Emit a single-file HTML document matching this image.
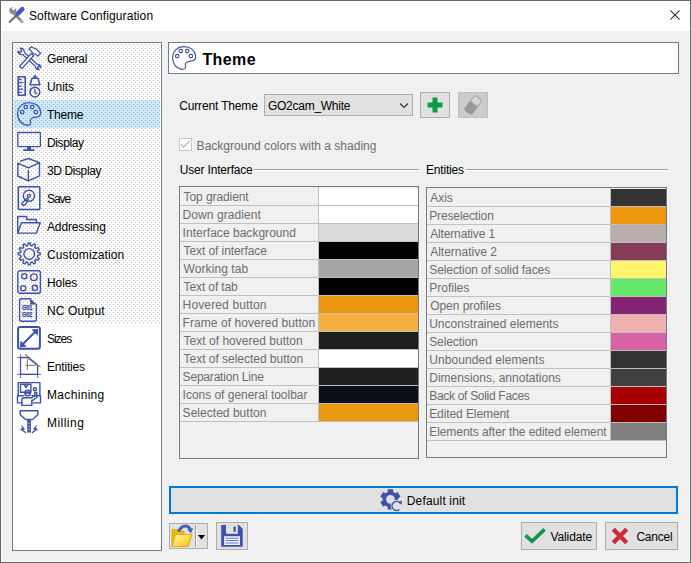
<!DOCTYPE html>
<html><head><meta charset="utf-8"><style>
*{margin:0;padding:0;box-sizing:border-box}
html,body{width:691px;height:563px;overflow:hidden;background:#f0f0f0;font-family:"Liberation Sans",sans-serif;font-size:12px;color:#000}
.a{position:absolute}
svg{position:absolute;overflow:visible}
#win{position:absolute;left:0;top:0;width:691px;height:563px;border:1px solid #676767;background:#f0f0f0}
#title{position:absolute;left:1px;top:1px;width:689px;height:30px;background:#fff}
.tbl{position:absolute;border:1px solid #747b86;background:#f0f0f0;box-sizing:content-box;overflow:hidden}
.tbl .lab{position:absolute;left:0;padding-left:3px;padding-top:1px;color:#6d6d6d;white-space:nowrap}
.tbl .col{position:absolute}
.tbl .sep{position:absolute;left:0;right:0;height:1px;background:#c0c0c0}
.tbl .vsep{position:absolute;width:1px;background:#c0c0c0}
.item{position:absolute;left:47px;height:28px;line-height:28px;padding-top:1px;white-space:nowrap}
.btn{position:absolute;background:#e1e1e1;border:1px solid #adadad}
</style></head><body>
<div id="win"></div>
<div id="title"></div>
<svg style="left:8.3px;top:7px" width="16" height="16" viewBox="0 0 16 16">
<path d="M5 5.5L14 14.5" stroke="#8a8a8a" stroke-width="2.6" stroke-linecap="round"/>
<path d="M1.2 3.5A3.6 3.6 0 1 0 7.5 1.2L5.5 3.6L3.5 1.8L5 0.2A3.6 3.6 0 0 0 1.2 3.5Z" fill="#8a8a8a"/>
<circle cx="13.6" cy="13.8" r="0.8" fill="#fff"/>
<path d="M8.5 8.5L1.5 15" stroke="#666" stroke-width="1.8" stroke-linecap="round"/>
<path d="M9.8 6.6L14.3 2.1" stroke="#4259c2" stroke-width="4.6" stroke-linecap="round"/>
</svg>
<div class="a" style="left:30px;top:7px;line-height:18px"><span class="t" style="letter-spacing:0.095px;margin-left:-1.00px;">Software Configuration</span></div>
<svg style="left:668px;top:8px" width="14" height="14" viewBox="0 0 14 14"><path d="M2.5 2.5L11.5 11.5M11.5 2.5L2.5 11.5" stroke="#000" stroke-width="1.05"/></svg>
<div class="a" style="left:12px;top:42px;width:150px;height:509px;border:1px solid #747b86;background:#fff"></div>
<svg style="left:13px;top:43px" width="148" height="281"><defs><pattern id="dots" x="0" y="1" width="4" height="4" patternUnits="userSpaceOnUse"><rect x="2" y="2" width="1" height="1" fill="#000" fill-opacity="0.25"/><rect x="0" y="0" width="1" height="1" fill="#000" fill-opacity="0.25"/></pattern></defs><rect x="1" y="57" width="146" height="28" fill="#cce8ff"/><rect width="148" height="281" fill="url(#dots)"/></svg>
<svg style="left:17px;top:46px" width="24" height="24" viewBox="0 0 24 24"><g fill="none" stroke="#3d52a8" stroke-width="1.3" stroke-linejoin="round">
<path d="M5.6 8.4L18.6 20.4M7.4 6.6L20.4 18.6"/>
<path d="M5.6 8.4C3.5 9 1 7.5 0.8 5.2L3 6.5L4.8 4.8L3.2 2.2C5.5 1.8 7.5 3.5 7.4 6.6"/>
<path d="M18.6 20.4C18.2 22.5 20 23.8 22 23.5L20.5 21.5L22 20L23.8 21.5C24 19.5 22.5 18.2 20.4 18.6"/>
<path d="M2.6 20.2L14.2 7.6L16.6 9.8L5 22.6Z" fill="#fff"/>
<path d="M12 2.8L14.5 0.8L16.8 2.2L18.6 2.6L23.6 7.4L21 10L18.5 8.2L16.5 7.8L14.6 5.6Z" fill="#fff"/>
</g></svg>
<div class="item" style="top:44px"><span class="t" style="letter-spacing:-0.400px;">General</span></div>
<svg style="left:17px;top:74px" width="24" height="24" viewBox="0 0 24 24"><g fill="none" stroke="#3d52a8" stroke-width="1.4" stroke-linejoin="round" stroke-linecap="round">
<rect x="1.2" y="2.8" width="7" height="18.4" stroke-width="1.6"/>
<path d="M1.5 5.5H4.3M1.5 8.7H5.5M1.5 12.2H4.3M1.5 15.2H5.5M1.5 18.4H4.3" stroke-width="1.3"/>
<circle cx="17.9" cy="2.7" r="1.1"/>
<path d="M15 4.3H21L22.9 10.7H13.1Z" stroke-width="1.5"/>
<circle cx="17.9" cy="18.1" r="4.9" stroke-width="1.5"/>
<path d="M17.9 15.2V18.6L19.8 19.6" stroke-width="1.3"/>
</g></svg>
<div class="item" style="top:72px"><span class="t" style="letter-spacing:-0.100px;">Units</span></div>
<svg style="left:17px;top:102px" width="24" height="24" viewBox="0 0 24 24"><g fill="none" stroke="#3a5bb8" stroke-width="1.3"><path d="M14.2 16.6C15.5 15.2 18 15.3 20.5 14.8C23 14.2 23.9 12 23.6 9.8C23 4.2 18.2 0.6 12 0.6C5.3 0.6 0.6 5.5 0.6 11.8C0.6 18.5 5.5 23.2 11 23.2C13.2 23.2 13.8 21.8 13.4 20.2C13 18.8 13 17.8 14.2 16.6Z"/>
<rect x="7.2" y="3.4" width="3.2" height="3.2" rx="1.2"/><rect x="13.6" y="3.4" width="3.2" height="3.2" rx="1.2"/>
<rect x="3.6" y="8.4" width="3.2" height="3.2" rx="1.2"/><rect x="17.3" y="8.4" width="3.2" height="3.2" rx="1.2"/></g></svg>
<div class="item" style="top:100px"><span class="t" style="letter-spacing:-0.250px;">Theme</span></div>
<svg style="left:17px;top:130px" width="24" height="24" viewBox="0 0 24 24"><g fill="none" stroke="#3d52a8" stroke-width="1.4" stroke-linejoin="round" stroke-linecap="round">
<rect x="0.8" y="2.5" width="22.6" height="14.2" rx="0.6" stroke-width="1.3"/>
</g><path d="M10 17H14V19.2H17.4V21H6.2V19.2H10Z" fill="#3d52a8"/></svg>
<div class="item" style="top:128px"><span class="t" style="letter-spacing:-0.400px;">Display</span></div>
<svg style="left:17px;top:158px" width="24" height="24" viewBox="0 0 24 24"><g fill="none" stroke="#3d52a8" stroke-width="1.4" stroke-linejoin="round" stroke-linecap="round" stroke-width="1.4">
<path d="M3.5 3.2L11.4 0.5L22.5 4.6L11.4 9.8L0.8 5.2V18L11.4 22.8L22.5 17.8V4.6"/>
<path d="M11.4 12.5V22.5"/>
</g></svg>
<div class="item" style="top:156px"><span class="t" style="letter-spacing:-0.400px;">3D Display</span></div>
<svg style="left:17px;top:186px" width="24" height="24" viewBox="0 0 24 24"><g fill="none" stroke="#3d52a8" stroke-width="1.4" stroke-linejoin="round" stroke-linecap="round">
<rect x="1.3" y="0.8" width="21.5" height="22.6" rx="0.8" stroke-width="1.5"/>
<circle cx="11.9" cy="9.8" r="5.6" stroke-width="1.4"/>
<circle cx="11.9" cy="9.8" r="1.5" stroke-width="1.3"/>
<path d="M10.5 12L4.6 17.5L6 19.3L8.2 18.8L11.5 13"/>
</g></svg>
<div class="item" style="top:184px"><span class="t" style="letter-spacing:-1.067px;">Save</span></div>
<svg style="left:17px;top:214px" width="24" height="24" viewBox="0 0 24 24"><g fill="none" stroke="#3d52a8" stroke-width="1.4" stroke-linejoin="round" stroke-linecap="round" stroke-width="1.5">
<path d="M0.7 18.9V2.5H9.7V5.5H19.4V8.7"/>
<path d="M4.5 8.7H23.3L19.4 19.1H0.7Z"/>
</g></svg>
<div class="item" style="top:212px"><span class="t" style="letter-spacing:-0.133px;">Addressing</span></div>
<svg style="left:17px;top:242px" width="24" height="24" viewBox="0 0 24 24"><g fill="none" stroke="#3d52a8" stroke-width="1.4" stroke-linejoin="round" stroke-linecap="round" stroke-width="1.4">
<path d="M10.74 3.42 L11.19 0.95 L13.21 0.95 L13.66 3.42 L15.18 3.83 L16.81 1.91 L18.55 2.92 L17.70 5.29 L18.81 6.40 L21.18 5.55 L22.19 7.29 L20.27 8.92 L20.68 10.44 L23.15 10.89 L23.15 12.91 L20.68 13.36 L20.27 14.88 L22.19 16.51 L21.18 18.25 L18.81 17.40 L17.70 18.51 L18.55 20.88 L16.81 21.89 L15.18 19.97 L13.66 20.38 L13.21 22.85 L11.19 22.85 L10.74 20.38 L9.22 19.97 L7.59 21.89 L5.85 20.88 L6.70 18.51 L5.59 17.40 L3.22 18.25 L2.21 16.51 L4.13 14.88 L3.72 13.36 L1.25 12.91 L1.25 10.89 L3.72 10.44 L4.13 8.92 L2.21 7.29 L3.22 5.55 L5.59 6.40 L6.70 5.29 L5.85 2.92 L7.59 1.91 L9.22 3.83Z"/>
<circle cx="12.2" cy="11.9" r="5.3"/>
</g></svg>
<div class="item" style="top:240px"><span class="t" style="letter-spacing:0.100px;">Customization</span></div>
<svg style="left:17px;top:270px" width="24" height="24" viewBox="0 0 24 24"><g fill="none" stroke="#3d52a8" stroke-width="1.4" stroke-linejoin="round" stroke-linecap="round" stroke-width="1.5">
<rect x="0.8" y="0.8" width="22.6" height="22.4" rx="2"/>
<circle cx="7.2" cy="6.2" r="2.6"/><circle cx="16.9" cy="7.2" r="3.3"/>
<circle cx="6.2" cy="18.2" r="2.6"/><circle cx="17.9" cy="17.9" r="2.6"/>
</g></svg>
<div class="item" style="top:268px"><span class="t" style="letter-spacing:-0.100px;">Holes</span></div>
<svg style="left:17px;top:298px" width="24" height="24" viewBox="0 0 24 24"><g fill="none" stroke="#3d52a8" stroke-width="1.4" stroke-linejoin="round" stroke-linecap="round" stroke-width="1.3">
<path d="M13.4 0.7H4.6Q2.6 0.7 2.6 2.7V21.3Q2.6 23.3 4.6 23.3H17.4Q19.4 23.3 19.4 21.3V6.2"/>
</g><path d="M13.2 0.5L19.6 6.4H13.2Z" fill="#3d52a8"/>
<text x="10.2" y="11.6" font-family="Liberation Sans" font-weight="bold" font-size="6.4" stroke="#3d52a8" stroke-width="0.3" fill="#3d52a8" text-anchor="middle" textLength="10.4" lengthAdjust="spacingAndGlyphs">G01</text>
<text x="10.2" y="18.6" font-family="Liberation Sans" font-weight="bold" font-size="6.4" stroke="#3d52a8" stroke-width="0.3" fill="#3d52a8" text-anchor="middle" textLength="10.4" lengthAdjust="spacingAndGlyphs">G02</text></svg>
<div class="item" style="top:296px"><span class="t" style="letter-spacing:0.101px;">NC Output</span></div>
<svg style="left:17px;top:326px" width="24" height="24" viewBox="0 0 24 24"><g fill="none" stroke="#3d52a8" stroke-width="2">
<rect x="1.1" y="1.1" width="21.8" height="21.6" rx="2"/>
<path d="M6 18L18 6"/>
</g><path d="M3 21.2L3.5 14.5L9.7 20.7Z M21.2 3L14.5 3.5L20.7 9.7Z" fill="#3d52a8"/></svg>
<div class="item" style="top:324px"><span class="t" style="letter-spacing:-1.050px;">Sizes</span></div>
<svg style="left:17px;top:354px" width="24" height="24" viewBox="0 0 24 24"><g fill="none" stroke="#8c8c8c" stroke-width="1.2">
<path d="M0 3.5H3.5M3.5 0V3.5M8.2 0.3L23.6 13.4M0 20.4H24M3.5 20.4V24M20.6 20.4V24M10.4 5V15.7M8.2 11.4H18.9"/>
</g><path d="M3.5 3.5H10.7L20.6 11.2V20.4H3.5Z" fill="none" stroke="#3d52a8" stroke-width="1.3"/></svg>
<div class="item" style="top:352px"><span class="t" style="letter-spacing:-0.200px;">Entities</span></div>
<svg style="left:17px;top:382px" width="24" height="24" viewBox="0 0 24 24"><g fill="none" stroke="#3d52a8" stroke-width="1.4" stroke-linejoin="round" stroke-linecap="round" stroke-width="1.3">
<path d="M1.2 13.4V0.6H22.9V13.4"/>
<rect x="3.5" y="2.2" width="10.4" height="8"/>
<path d="M7 2.5L9 5.5L11 2.5"/>
<path d="M0.5 13.8H6.5M15 13.8H23.5V20.9H16M0.5 13.8V20.9H5"/>
<circle cx="10.6" cy="11" r="2.8"/>
<path d="M8 11H13.2"/>
<path d="M4.8 23.4V18.5Q4.8 15.8 7.5 15.8H14.5L17.8 14V10.5H19.8V15.5L16 18.2H14.8V23.4Z"/>
<circle cx="17.9" cy="7.2" r="1.5"/>
</g></svg>
<div class="item" style="top:380px"><span class="t" style="letter-spacing:0.325px;">Machining</span></div>
<svg style="left:17px;top:410px" width="24" height="24" viewBox="0 0 24 24"><g fill="none" stroke="#3d52a8" stroke-width="1.4" stroke-linejoin="round" stroke-linecap="round" stroke-width="1.5">
<path d="M3.2 0.8H20.9V4.7L15.4 9.5H8.7L3.2 4.7Z"/>
</g><rect x="10.2" y="9.5" width="3.7" height="13" fill="#3d52a8"/>
<path d="M11.2 13.3H12.9M11.2 16.3H12.9M11.2 19.3H12.9" stroke="#dfe3f2" stroke-width="0.8"/>
<g fill="none" stroke="#3d52a8" stroke-width="1.2"><path d="M4.5 15.5L7 19L5.5 20.5L8 22M6 18L4 19.5L7.5 21.5L9 23"/><path d="M19.5 15.5L17 19L18.5 20.5L16 22M18 18L20 19.5L16.5 21.5L15 23"/></g></svg>
<div class="item" style="top:408px"><span class="t" style="letter-spacing:0.467px;">Milling</span></div>

<div class="a" style="left:168px;top:42px;width:511px;height:32px;border:1px solid #767d89;background:#fff"></div>
<svg style="left:172px;top:46px" width="24" height="24" viewBox="0 0 24 24"><g fill="none" stroke="#3f4fa0" stroke-width="1.1"><path d="M14.2 16.6C15.5 15.2 18 15.3 20.5 14.8C23 14.2 23.9 12 23.6 9.8C23 4.2 18.2 0.6 12 0.6C5.3 0.6 0.6 5.5 0.6 11.8C0.6 18.5 5.5 23.2 11 23.2C13.2 23.2 13.8 21.8 13.4 20.2C13 18.8 13 17.8 14.2 16.6Z"/>
<rect x="7.2" y="3.4" width="3.2" height="3.2" rx="1.2"/><rect x="13.6" y="3.4" width="3.2" height="3.2" rx="1.2"/>
<rect x="3.6" y="8.4" width="3.2" height="3.2" rx="1.2"/><rect x="17.3" y="8.4" width="3.2" height="3.2" rx="1.2"/></g></svg>
<div class="a" style="left:202px;top:49px;font-weight:bold;font-size:16px;line-height:22px;letter-spacing:0.45px"><span class="t" style="letter-spacing:0.400px;margin-left:0.40px;">Theme</span></div>
<div class="a" style="left:180px;top:97px;line-height:18px"><span class="t" style="letter-spacing:-0.150px;margin-left:-0.80px;">Current Theme</span></div>
<div class="btn" style="left:264px;top:94px;width:149px;height:22px"></div>
<div class="a" style="left:268px;top:97px;line-height:18px"><span class="t" style="letter-spacing:-0.272px;">GO2cam_White</span></div>
<svg style="left:399px;top:102px" width="10" height="7"><path d="M1 1.5L5 5.5L9 1.5" stroke="#333" stroke-width="1.2" fill="none"/></svg>
<div class="btn" style="left:420px;top:92px;width:30px;height:26px"></div>
<svg style="left:420px;top:92px" width="30" height="26"><path d="M12.5 5.5H17.5V10.5H22.5V15.5H17.5V20.5H12.5V15.5H7.5V10.5H12.5Z" fill="#0e9a45"/></svg>
<div class="btn" style="left:458px;top:92px;width:30px;height:26px;background:#cccccc;border-color:#bfbfbf"></div>
<svg style="left:458px;top:92px" width="30" height="26"><g transform="rotate(37 15 13)"><rect x="10" y="3.5" width="10" height="19" rx="3" fill="#999"/><path d="M13 4H17Q19.5 4 19.5 6.5V11.5H10.5V6.5Q10.5 4 13 4Z" fill="#d4d4d4" stroke="#a6a6a6" stroke-width="0.9"/></g></svg>
<div class="a" style="left:179px;top:138px;width:13px;height:13px;border:1px solid #c6c6c6;background:#fff"></div>
<svg style="left:179px;top:138px" width="13" height="13"><path d="M2 6.2L4.5 9L10.7 3" stroke="#bcbcbc" stroke-width="1.3" fill="none"/></svg>
<div class="a" style="left:197px;top:137px;line-height:18px;color:#6d6d6d"><span class="t" style="letter-spacing:0.012px;margin-left:-0.40px;">Background colors with a shading</span></div>
<div class="a" style="left:180px;top:161px;line-height:18px"><span class="t" style="letter-spacing:-0.184px;margin-left:-0.20px;">User Interface</span></div>
<div class="a" style="left:254px;top:169px;width:165px;height:1px;background:#a0a0a0;box-shadow:0 1px 0 #fff"></div>
<div class="a" style="left:427px;top:161px;line-height:18px"><span class="t" style="letter-spacing:-0.200px;margin-left:-1.00px;">Entities</span></div>
<div class="a" style="left:466px;top:169px;width:202px;height:1px;background:#a0a0a0;box-shadow:0 1px 0 #fff"></div>
<div class="tbl" style="left:179px;top:186px;width:238px;height:271px"><div class="lab" style="top:1px;height:17px;width:138px;line-height:17px"><span class="t" style="letter-spacing:-0.091px;margin-left:0.60px;">Top gradient</span></div><div class="col" style="top:1px;height:17px;left:139px;right:0;background:#ffffff"></div><div class="sep" style="top:18px"></div><div class="lab" style="top:19px;height:17px;width:138px;line-height:17px"><span class="t" style="letter-spacing:0.067px;margin-left:-0.40px;">Down gradient</span></div><div class="col" style="top:19px;height:17px;left:139px;right:0;background:#ffffff"></div><div class="sep" style="top:36px"></div><div class="lab" style="top:37px;height:17px;width:138px;line-height:17px"><span class="t" style="letter-spacing:0.031px;margin-left:-0.40px;">Interface background</span></div><div class="col" style="top:37px;height:17px;left:139px;right:0;background:#dcdbdb"></div><div class="sep" style="top:54px"></div><div class="lab" style="top:55px;height:17px;width:138px;line-height:17px"><span class="t" style="letter-spacing:-0.088px;margin-left:0.60px;">Text of interface</span></div><div class="col" style="top:55px;height:17px;left:139px;right:0;background:#000000"></div><div class="sep" style="top:72px"></div><div class="lab" style="top:73px;height:17px;width:138px;line-height:17px"><span class="t" style="letter-spacing:0.080px;margin-left:0.60px;">Working tab</span></div><div class="col" style="top:73px;height:17px;left:139px;right:0;background:#a6a6a6"></div><div class="sep" style="top:90px"></div><div class="lab" style="top:91px;height:17px;width:138px;line-height:17px"><span class="t" style="letter-spacing:-0.120px;margin-left:0.60px;">Text of tab</span></div><div class="col" style="top:91px;height:17px;left:139px;right:0;background:#000000"></div><div class="sep" style="top:108px"></div><div class="lab" style="top:109px;height:17px;width:138px;line-height:17px"><span class="t" style="letter-spacing:0.138px;margin-left:-0.40px;">Hovered button</span></div><div class="col" style="top:109px;height:17px;left:139px;right:0;background:#ec960f"></div><div class="sep" style="top:126px"></div><div class="lab" style="top:127px;height:17px;width:138px;line-height:17px"><span class="t" style="letter-spacing:0.055px;margin-left:-0.40px;">Frame of hovered button</span></div><div class="col" style="top:127px;height:17px;left:139px;right:0;background:#f5b042"></div><div class="sep" style="top:144px"></div><div class="lab" style="top:145px;height:17px;width:138px;line-height:17px"><span class="t" style="letter-spacing:0.019px;margin-left:0.60px;">Text of hovered button</span></div><div class="col" style="top:145px;height:17px;left:139px;right:0;background:#1e1e1e"></div><div class="sep" style="top:162px"></div><div class="lab" style="top:163px;height:17px;width:138px;line-height:17px"><span class="t" style="letter-spacing:-0.027px;margin-left:0.60px;">Text of selected button</span></div><div class="col" style="top:163px;height:17px;left:139px;right:0;background:#ffffff"></div><div class="sep" style="top:180px"></div><div class="lab" style="top:181px;height:17px;width:138px;line-height:17px"><span class="t" style="letter-spacing:-0.200px;margin-left:-0.40px;">Separation Line</span></div><div class="col" style="top:181px;height:17px;left:139px;right:0;background:#201f1d"></div><div class="sep" style="top:198px"></div><div class="lab" style="top:199px;height:17px;width:138px;line-height:17px"><span class="t" style="letter-spacing:-0.026px;margin-left:-0.40px;">Icons of general toolbar</span></div><div class="col" style="top:199px;height:17px;left:139px;right:0;background:#0b101a"></div><div class="sep" style="top:216px"></div><div class="lab" style="top:217px;height:17px;width:138px;line-height:17px"><span class="t" style="letter-spacing:0.028px;margin-left:-0.40px;">Selected button</span></div><div class="col" style="top:217px;height:17px;left:139px;right:0;background:#ec980f"></div><div class="sep" style="top:234px"></div><div class="vsep" style="left:138px;top:0;height:234px"></div></div>
<div class="tbl" style="left:426px;top:187px;width:239px;height:269px"><div class="lab" style="top:1px;height:17px;width:183px;line-height:17px"><span class="t" style="margin-left:0.20px;">Axis</span></div><div class="col" style="top:1px;height:17px;left:184px;right:0;background:#333333"></div><div class="sep" style="top:18px"></div><div class="lab" style="top:19px;height:17px;width:183px;line-height:17px"><span class="t" style="letter-spacing:-0.128px;margin-left:-0.80px;">Preselection</span></div><div class="col" style="top:19px;height:17px;left:184px;right:0;background:#ee960e"></div><div class="sep" style="top:36px"></div><div class="lab" style="top:37px;height:17px;width:183px;line-height:17px"><span class="t" style="letter-spacing:-0.150px;margin-left:0.20px;">Alternative 1</span></div><div class="col" style="top:37px;height:17px;left:184px;right:0;background:#b9aeab"></div><div class="sep" style="top:54px"></div><div class="lab" style="top:55px;height:17px;width:183px;line-height:17px"><span class="t" style="margin-left:0.20px;">Alternative 2</span></div><div class="col" style="top:55px;height:17px;left:184px;right:0;background:#843c58"></div><div class="sep" style="top:72px"></div><div class="lab" style="top:73px;height:17px;width:183px;line-height:17px"><span class="t" style="letter-spacing:-0.078px;margin-left:-0.80px;">Selection of solid faces</span></div><div class="col" style="top:73px;height:17px;left:184px;right:0;background:#fff56c"></div><div class="sep" style="top:90px"></div><div class="lab" style="top:91px;height:17px;width:183px;line-height:17px"><span class="t" style="margin-left:-0.80px;">Profiles</span></div><div class="col" style="top:91px;height:17px;left:184px;right:0;background:#66e86a"></div><div class="sep" style="top:108px"></div><div class="lab" style="top:109px;height:17px;width:183px;line-height:17px"><span class="t" style="letter-spacing:-0.050px;margin-left:0.20px;">Open profiles</span></div><div class="col" style="top:109px;height:17px;left:184px;right:0;background:#822470"></div><div class="sep" style="top:126px"></div><div class="lab" style="top:127px;height:17px;width:183px;line-height:17px"><span class="t" style="letter-spacing:-0.010px;margin-left:-0.80px;">Unconstrained elements</span></div><div class="col" style="top:127px;height:17px;left:184px;right:0;background:#f0b0b0"></div><div class="sep" style="top:144px"></div><div class="lab" style="top:145px;height:17px;width:183px;line-height:17px"><span class="t" style="letter-spacing:-0.100px;margin-left:-0.80px;">Selection</span></div><div class="col" style="top:145px;height:17px;left:184px;right:0;background:#d862a6"></div><div class="sep" style="top:162px"></div><div class="lab" style="top:163px;height:17px;width:183px;line-height:17px"><span class="t" style="letter-spacing:0.070px;margin-left:-0.80px;">Unbounded elements</span></div><div class="col" style="top:163px;height:17px;left:184px;right:0;background:#333333"></div><div class="sep" style="top:180px"></div><div class="lab" style="top:181px;height:17px;width:183px;line-height:17px"><span class="t" style="letter-spacing:0.009px;margin-left:-0.80px;">Dimensions, annotations</span></div><div class="col" style="top:181px;height:17px;left:184px;right:0;background:#404040"></div><div class="sep" style="top:198px"></div><div class="lab" style="top:199px;height:17px;width:183px;line-height:17px"><span class="t" style="letter-spacing:-0.300px;margin-left:-0.80px;">Back of Solid Faces</span></div><div class="col" style="top:199px;height:17px;left:184px;right:0;background:#a80000"></div><div class="sep" style="top:216px"></div><div class="lab" style="top:217px;height:17px;width:183px;line-height:17px"><span class="t" style="letter-spacing:-0.093px;margin-left:-0.80px;">Edited Element</span></div><div class="col" style="top:217px;height:17px;left:184px;right:0;background:#800000"></div><div class="sep" style="top:234px"></div><div class="lab" style="top:235px;height:17px;width:183px;line-height:17px"><span class="t" style="letter-spacing:-0.063px;margin-left:-0.80px;">Elements after the edited element</span></div><div class="col" style="top:235px;height:17px;left:184px;right:0;background:#808080"></div><div class="sep" style="top:252px"></div><div class="vsep" style="left:183px;top:0;height:252px"></div></div>

<div class="btn" style="left:169px;top:486px;width:509px;height:28px;border:2px solid #0078d7"></div>
<svg style="left:376px;top:486px" width="30" height="28"><path d="M11.57 6.02 L11.71 3.35 L17.09 3.35 L17.23 6.02 L19.37 7.26 L21.75 6.05 L24.45 10.71 L22.20 12.16 L22.20 14.64 L24.45 16.09 L21.75 20.75 L19.37 19.54 L17.23 20.78 L17.09 23.45 L11.71 23.45 L11.57 20.78 L9.43 19.54 L7.05 20.75 L4.35 16.09 L6.60 14.64 L6.60 12.16 L4.35 10.71 L7.05 6.05 L9.43 7.26Z" fill="#3d52a8"/><circle cx="14.4" cy="13.4" r="4.3" fill="#e1e1e1"/><circle cx="20.9" cy="19.9" r="6.2" fill="#e1e1e1"/><path d="M24.5 17.5A4.6 4.6 0 1 0 23.5 23.5" fill="none" stroke="#3d52a8" stroke-width="1.3"/><path d="M22.3 16.5L25.6 18.8L26 14.6Z" fill="#3d52a8"/></svg>
<div class="a" style="left:407px;top:492px;line-height:18px"><span class="t" style="letter-spacing:0.146px;margin-left:-0.20px;">Default init</span></div>
<div class="btn" style="left:169px;top:523px;width:39px;height:26px"></div>
<div class="a" style="left:195px;top:525px;width:1px;height:22px;background:#a0a0a0;box-shadow:1px 0 0 #f6f6f6"></div>
<svg style="left:166px;top:519px" width="44" height="34"><path d="M198 535H205L201.5 539.5Z" transform="translate(-166 -519)" fill="#000"/>
<defs><linearGradient id="fy" x1="0" y1="0" x2="1" y2="1"><stop offset="0" stop-color="#fff7b0"/><stop offset="1" stop-color="#f5c400"/></linearGradient></defs>
<path d="M6 10.5H11L12.5 12H18V26.5H6Z" fill="#f2b800" stroke="#e0a000" stroke-width="0.8"/>
<path d="M9.5 15.5H26L22 27.5H6Z" fill="url(#fy)" stroke="#e8a400" stroke-width="0.9"/>
<path d="M12.4 12.6Q15.5 6.8 19.8 7.1Q23 7.4 24.3 10.6" fill="none" stroke="#4660b8" stroke-width="3"/>
<path d="M21.4 10.6L27.2 9L24.9 14.6Z" fill="#4660b8"/>
</svg>
<div class="btn" style="left:216px;top:522px;width:32px;height:28px"></div>
<svg style="left:213px;top:519px" width="38" height="34"><path d="M8.2 6H26L29.7 10V27.8H8.2Z" fill="#3d52a8"/><rect x="13" y="6" width="11.8" height="8.8" fill="#e1e1e1"/><rect x="20.5" y="7.6" width="2.2" height="5.1" fill="#3d52a8"/><rect x="11.2" y="17.2" width="15.7" height="8.8" fill="#f4f4f8"/><path d="M12.6 19.2H25.5M12.6 21.5H25.5M12.6 24H25.5" stroke="#6175c0" stroke-width="1"/></svg>
<div class="btn" style="left:521px;top:522px;width:76px;height:28px"></div>
<svg style="left:521px;top:522px" width="30" height="28"><path d="M4.6 13.3L11 19.3L23.6 7.4" fill="none" stroke="#10974a" stroke-width="3.7"/></svg>
<div class="a" style="left:550px;top:528px;line-height:18px"><span class="t" style="letter-spacing:-0.085px;margin-left:0.40px;">Validate</span></div>
<div class="btn" style="left:605px;top:522px;width:73px;height:28px"></div>
<svg style="left:605px;top:522px" width="30" height="28"><path d="M8.3 7.3L21.7 20.7M21.7 7.3L8.3 20.7" fill="none" stroke="#cb2a37" stroke-width="4.4"/></svg>
<div class="a" style="left:636px;top:528px;line-height:18px"><span class="t" style="letter-spacing:-0.240px;margin-left:0.40px;">Cancel</span></div>
<div class="a" style="left:689px;top:31px;width:1px;height:531px;background:#fafafa"></div>
<div class="a" style="left:1px;top:561px;width:689px;height:1px;background:#fafafa"></div>
<div class="a" style="left:1px;top:31px;width:1px;height:530px;background:#fafafa"></div>
</body></html>
